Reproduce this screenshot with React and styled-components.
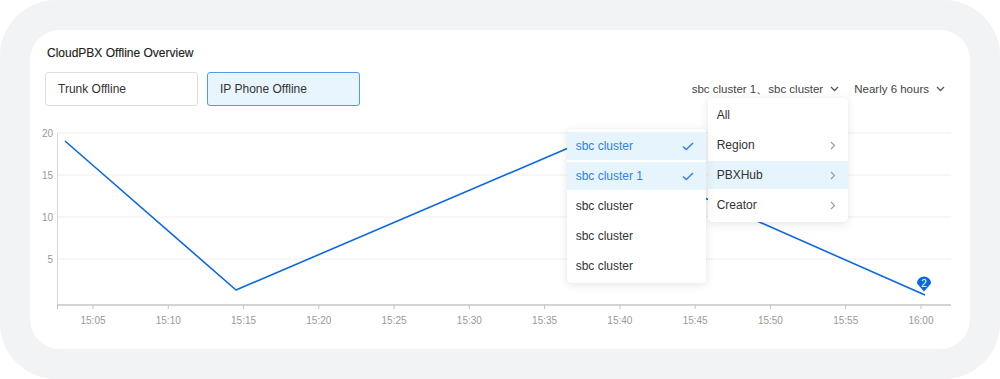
import React from "react";
import styled, { createGlobalStyle } from "styled-components";

const Global = createGlobalStyle`
  html, body { margin: 0; padding: 0; background: #ffffff; }
  body { font-family: "Liberation Sans", Arial, sans-serif; }
`;

const Frame = styled.div`
  width: 1000px;
  height: 379px;
  box-sizing: border-box;
  padding: 30px;
  background: #f2f3f5;
  border-radius: 56px;
`;

const Card = styled.div`
  position: relative;
  height: 319px;
  box-sizing: border-box;
  padding: 14px 15px 0;
  background: #ffffff;
  border-radius: 30px;
`;

const Title = styled.div`
  font-size: 12px;
  line-height: 18px;
  color: #222;
  padding-left: 2px;
  -webkit-text-stroke: 0.15px #222;
`;

const HeaderRow = styled.div`
  display: flex;
  align-items: center;
  margin-top: 10px;
  height: 34px;
`;

const Tabs = styled.div`
  display: flex;
  gap: 9px;
`;

const TabButton = styled.div`
  width: 153px;
  height: 34px;
  box-sizing: border-box;
  display: flex;
  align-items: center;
  padding-left: 12px;
  font-size: 12px;
  color: #333;
  border-radius: 3px;
  border: 1px solid ${(p) => (p.$active ? "#4d9cf0" : "#dedede")};
  background: ${(p) => (p.$active ? "#e8f5fe" : "#ffffff")};
`;

const Controls = styled.div`
  margin-left: auto;
  margin-right: 10px;
  display: flex;
  align-items: center;
  gap: 15px;
`;

const Select = styled.div`
  position: relative;
  display: flex;
  align-items: center;
  gap: 7px;
  height: 20px;
  font-size: 11.5px;
  color: #444;
`;

const Menu = styled.div`
  position: absolute;
  z-index: 5;
  width: 140px;
  box-sizing: border-box;
  padding: 3px 0;
  display: flex;
  flex-direction: column;
  gap: 2px;
  background: #ffffff;
  border-radius: 4px;
  box-shadow: 0 2px 10px rgba(0, 0, 0, 0.1), 0 0 1px rgba(0, 0, 0, 0.08);
`;

const MainMenu = styled(Menu)`
  top: 19px;
  left: 16px;
`;

const SubMenu = styled(Menu)`
  width: 139px;
  top: 31px;
  right: calc(100% + 2px);
`;

const Item = styled.div`
  height: 28px;
  display: flex;
  align-items: center;
  justify-content: space-between;
  padding: 0 12px 0 9px;
  font-size: 12px;
  color: ${(p) => (p.$selected ? "#2f7fe6" : "#333")};
  background: ${(p) => (p.$selected || p.$hover ? "#e6f4fe" : "transparent")};
`;

const ChartWrap = styled.div`
  margin: 9px 0 0 -4px;
  width: 913px;
  height: 215px;
  overflow: hidden;
`;

const Chevron = () => (
  <svg width="9" height="6" viewBox="0 0 9 6">
    <path d="M1 1 L4.5 4.5 L8 1" fill="none" stroke="#555" strokeWidth="1.3" />
  </svg>
);

const ChevronRight = () => (
  <svg width="6" height="9" viewBox="0 0 6 9">
    <path d="M1 1 L4.5 4.5 L1 8" fill="none" stroke="#999" strokeWidth="1.1" />
  </svg>
);

const Check = () => (
  <svg width="12" height="9" viewBox="0 0 12 9">
    <path d="M1 4.5 L4.3 7.6 L11 1" fill="none" stroke="#2f7fe6" strokeWidth="1.4" />
  </svg>
);

const yTicks = [
  { v: "20", y: 18 },
  { v: "15", y: 60 },
  { v: "10", y: 102 },
  { v: "5", y: 144 },
];

const xLabels = ["15:05", "15:10", "15:15", "15:20", "15:25", "15:30", "15:35", "15:40", "15:45", "15:50", "15:55", "16:00"];

const axisFont = "Liberation Sans, Arial, sans-serif";

const Chart = () => (
  <svg width="913" height="215" viewBox="-1 0 913 215">
    {yTicks.map((t) => (
      <g key={t.v}>
        <line x1="15" x2="909" y1={t.y} y2={t.y} stroke="#efefef" strokeWidth="1" />
        <text x="11" y={t.y + 3.5} textAnchor="end" fontSize="10" fill="#999" fontFamily={axisFont}>
          {t.v}
        </text>
      </g>
    ))}
    <line x1="15.5" x2="15.5" y1="18" y2="190" stroke="#d6d6d6" strokeWidth="1" />
    <line x1="15" x2="909" y1="190" y2="190" stroke="#c4c4c4" strokeWidth="1.5" />
    <line x1="15.5" x2="15.5" y1="190" y2="194" stroke="#c4c4c4" strokeWidth="1" />
    {xLabels.map((l, i) => {
      const x = 51 + i * 75.27;
      return (
        <g key={l}>
          <line x1={x} x2={x} y1="190" y2="194" stroke="#c4c4c4" strokeWidth="1" />
          <text x={x} y="209" textAnchor="middle" fontSize="10" fill="#999" fontFamily={axisFont}>
            {l}
          </text>
        </g>
      );
    })}
    <polyline
      points="23,26 194,175 538,28 883,180"
      fill="none"
      stroke="#0b68e0"
      strokeWidth="1.6"
      strokeLinejoin="round"
    />
    <path d="M875 168.5 A7 7 0 1 1 889 168.5 L882 176.5 Z" fill="#0b68e0" />
    <text x="882" y="171.5" textAnchor="middle" fontSize="10" fill="#fff" fontFamily={axisFont}>
      2
    </text>
  </svg>
);

export default function App() {
  return (
    <>
      <Global />
      <Frame>
        <Card>
          <Title>CloudPBX Offline Overview</Title>
          <HeaderRow>
            <Tabs>
              <TabButton>Trunk Offline</TabButton>
              <TabButton $active>IP Phone Offline</TabButton>
            </Tabs>
            <Controls>
              <Select>
                sbc cluster 1、sbc cluster
                <Chevron />
                <MainMenu>
                  <Item>All</Item>
                  <Item>
                    Region
                    <ChevronRight />
                  </Item>
                  <Item $hover>
                    PBXHub
                    <ChevronRight />
                  </Item>
                  <Item>
                    Creator
                    <ChevronRight />
                  </Item>
                  <SubMenu>
                    <Item $selected>
                      sbc cluster
                      <Check />
                    </Item>
                    <Item $selected>
                      sbc cluster 1
                      <Check />
                    </Item>
                    <Item>sbc cluster</Item>
                    <Item>sbc cluster</Item>
                    <Item>sbc cluster</Item>
                  </SubMenu>
                </MainMenu>
              </Select>
              <Select>
                Nearly 6 hours
                <Chevron />
              </Select>
            </Controls>
          </HeaderRow>
          <ChartWrap>
            <Chart />
          </ChartWrap>
        </Card>
      </Frame>
    </>
  );
}
